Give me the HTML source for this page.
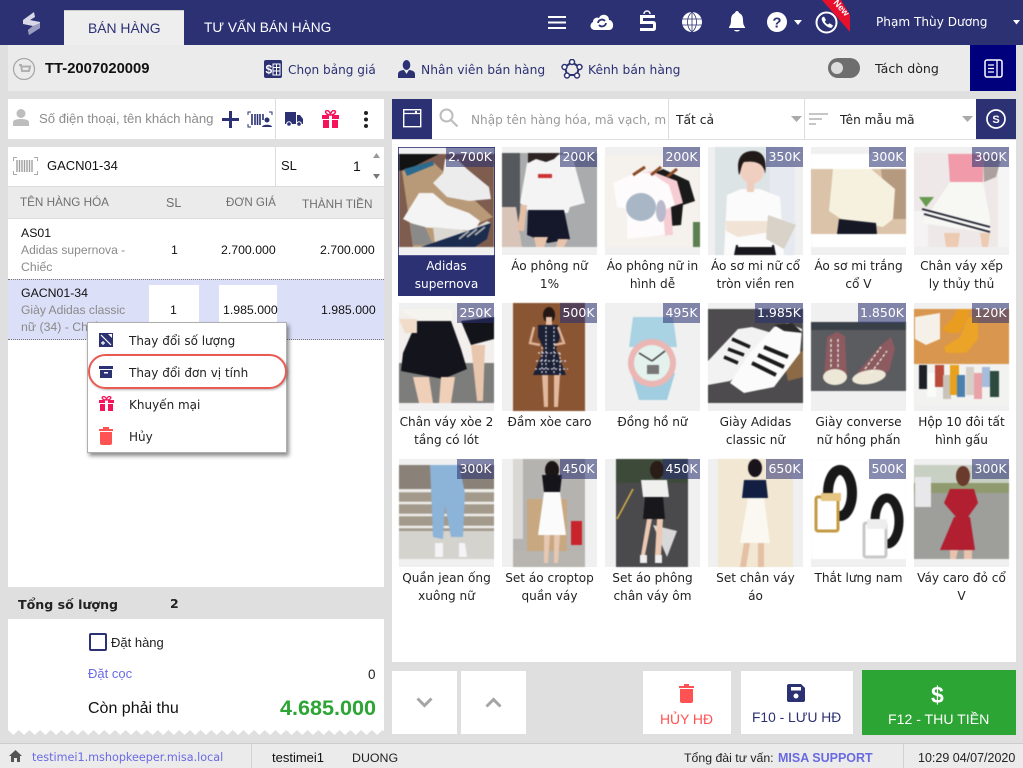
<!DOCTYPE html>
<html><head><meta charset="utf-8"><style>
html,body{margin:0;padding:0}
body{width:1023px;height:768px;position:relative;overflow:hidden;background:#dfdfdf;font-family:"Liberation Sans",sans-serif;font-size:13px;color:#222}
.b{position:absolute}
.t{position:absolute;white-space:nowrap;line-height:18px}
.o{font-family:"DejaVu Sans",sans-serif;font-size:12px}
.n{color:#2b3173}
.g{color:#8a8a8a}
svg{position:absolute;display:block;overflow:hidden}
.tile{position:absolute;width:95px;height:108px;background:#f0f0f0}
.tile svg{left:0;top:0;filter:blur(.5px)}
.p{position:absolute;top:0;right:0;height:20px;line-height:20px;background:rgba(43,49,115,.56);color:#fff;font-family:"DejaVu Sans",sans-serif;font-size:12.5px;text-align:center}
.l{position:absolute;width:103px;text-align:center;font-family:"DejaVu Sans",sans-serif;font-size:12.1px;line-height:18px;color:#222}
</style></head><body>

<!-- header -->
<div class="b" style="left:0;top:0;width:1023px;height:45px;background:#2b3173"></div>
<svg style="left:22px;top:10px" width="20" height="26" viewBox="0 0 20 26"><path d="M1 10 L12 2 L13 7 L8 10 L18 12 L18 18 L7 25 L6 20 L11 16 L1 14Z" fill="#d8d8e6"/><path d="M7 25 L18 18 L18 13 L11 16 L6 20Z" fill="#9a9cc0"/></svg>
<div class="b" style="left:64px;top:10px;width:120px;height:35px;background:#eeeeee;box-sizing:border-box;border-top:1px solid #c9c9c9"></div>
<div class="t n" style="left:88px;top:19px;font-size:13.900px">BÁN HÀNG</div>
<div class="t" style="left:204px;top:19px;font-size:13.700px;color:#fff">TƯ VẤN BÁN HÀNG</div>

<svg style="left:548px;top:15px" width="19" height="15" viewBox="0 0 19 15"><path d="M0 2H18M0 7.500H18M0 13H18" stroke="#fff" stroke-width="2"/></svg>
<svg style="left:589px;top:12px" width="26" height="20" viewBox="0 0 26 20"><path d="M6 18 C1 18 0 12 4 10 C4 6 8 5 10 6 C12 1 20 2 20 8 C25 8 26 18 20 18Z" fill="#fff"/><path d="M9 11 A4 4 0 0 1 16 9 M17 11 A4 4 0 0 1 10 13" fill="none" stroke="#2b3173" stroke-width="1.800"/></svg>
<svg style="left:638px;top:10px" width="20" height="23" viewBox="0 0 20 23"><path d="M6 4 C6 0 12 0 12 4" fill="none" stroke="#fff" stroke-width="1.500"/><path d="M2 5H17V8H5V11H15Q18 11 18 14V18Q18 21 15 21H2V18H15V14H2Z" fill="#fff"/></svg>
<svg style="left:681px;top:11px" width="22" height="22" viewBox="0 0 22 22"><circle cx="11" cy="11" r="10" fill="#fff"/><path d="M1 8H21M1 14H21M11 1V21M11 1C5 6 5 16 11 21M11 1C17 6 17 16 11 21" fill="none" stroke="#2b3173" stroke-width=".8"/></svg>
<svg style="left:728px;top:11px" width="18" height="21" viewBox="0 0 18 21"><path d="M9 0C10 0 11 1 11 2C14 3 15 6 15 9C15 13 16 15 17 16V17H1V16C2 15 3 13 3 9C3 6 4 3 7 2C7 1 8 0 9 0Z" fill="#fff"/><path d="M6 19H12C11 21 7 21 6 19Z" fill="#fff"/></svg>
<svg style="left:767px;top:12px" width="20" height="20" viewBox="0 0 20 20"><circle cx="10" cy="10" r="10" fill="#fff"/><text x="10" y="15.500" text-anchor="middle" font-family="Liberation Sans" font-weight="bold" font-size="15" fill="#2b3173">?</text></svg>
<svg style="left:794px;top:20px" width="8" height="5" viewBox="0 0 8 5"><path d="M0 0H8L4 5Z" fill="#fff"/></svg>
<svg style="left:815px;top:11px" width="23" height="23" viewBox="0 0 23 23"><circle cx="11.500" cy="11.500" r="10" fill="none" stroke="#fff" stroke-width="2"/><path d="M7 6.500L9 5.500L11 9L9.800 10.500C10.500 12 11.500 13 13 13.500L14.500 12.200L18 14.500L17 16.500C14 18.500 5 11 7 6.500Z" fill="#fff"/></svg>
<svg style="left:820px;top:0" width="32" height="34" viewBox="0 0 32 34"><path d="M2 0H21L30 15V32Z" fill="#e8112d"/><text x="0" y="0" transform="translate(13,3) rotate(48)" font-family="Liberation Sans" font-weight="bold" font-size="9" fill="#fff">New</text></svg>
<div class="t" style="left:876px;top:13px;color:#fff;font-family:'DejaVu Sans',sans-serif;font-size:12.100px">Phạm Thùy Dương</div>
<svg style="left:1013px;top:20px" width="7" height="5" viewBox="0 0 7 5"><path d="M0 0H7L3.500 4.500Z" fill="#fff"/></svg>

<!-- toolbar -->
<div class="b" style="left:8px;top:45px;width:962px;height:46px;background:#ebebeb"></div>
<div class="b" style="left:970px;top:45px;width:46px;height:46px;background:#00007d"></div>
<svg style="left:12px;top:57px" width="24" height="24" viewBox="0 0 24 24"><circle cx="12" cy="12" r="10.500" fill="none" stroke="#a5a5a5" stroke-width="1.200"/><path d="M7 8H9L10 14H17L18 9.500H9.500M10.500 16.500h.1M16 16.500h.1" fill="none" stroke="#b0b0b0" stroke-width="2"/></svg>
<div class="t" style="left:45px;top:60px;font-size:14.800px;font-weight:bold;color:#111">TT-2007020009</div>
<svg style="left:264px;top:60px" width="18" height="18" viewBox="0 0 18 18"><rect width="18" height="18" rx="2" fill="#2b3173"/><text x="1.500" y="13.500" font-family="Liberation Sans" font-weight="bold" font-size="12" fill="#fff">$</text><path d="M9 4H16V15H9ZM9 7.500H16M9 11H16M12.500 4V15" fill="none" stroke="#fff" stroke-width="1"/></svg>
<div class="t n o" style="left:288px;top:61px;font-size:12.100px">Chọn bảng giá</div>
<svg style="left:398px;top:60px" width="17" height="18" viewBox="0 0 17 18"><ellipse cx="8.500" cy="5" rx="3.800" ry="5" fill="#2b3173"/><path d="M0 18V14C0 11 4 10 6 10L8.500 14L11 10C13 10 17 11 17 14V18Z" fill="#2b3173"/></svg>
<div class="t n o" style="left:421px;top:61px;font-size:12.300px">Nhân viên bán hàng</div>
<svg style="left:561px;top:59px" width="22" height="20" viewBox="0 0 22 20"><path d="M11 3L18 8L16 16H6L4 8Z" fill="none" stroke="#2b3173" stroke-width="2"/><circle cx="11" cy="3" r="2.500" fill="#fff" stroke="#2b3173" stroke-width="1.500"/><circle cx="18.500" cy="8" r="2.500" fill="#fff" stroke="#2b3173" stroke-width="1.500"/><circle cx="3.500" cy="8" r="2.500" fill="#fff" stroke="#2b3173" stroke-width="1.500"/><circle cx="16" cy="16.500" r="2.500" fill="#fff" stroke="#2b3173" stroke-width="1.500"/><circle cx="6" cy="16.500" r="2.500" fill="#fff" stroke="#2b3173" stroke-width="1.500"/></svg>
<div class="t n o" style="left:588px;top:61px;font-size:12.300px">Kênh bán hàng</div>
<div class="b" style="left:828px;top:58px;width:32px;height:20px;border-radius:10px;background:#6e6e6e"></div>
<div class="b" style="left:831px;top:62px;width:12px;height:12px;border-radius:6px;background:#dcdcdc"></div>
<div class="t o" style="left:875px;top:60px;font-size:12.600px;color:#222">Tách dòng</div>
<svg style="left:984px;top:59px" width="19" height="19" viewBox="0 0 19 19"><rect x="1" y="1" width="17" height="17" rx="2" fill="none" stroke="#fff" stroke-width="1.500"/><path d="M13 1V18M4 6H10M4 9.500H10M4 13H10" stroke="#fff" stroke-width="1.300"/></svg>

<!-- customer row -->
<div class="b" style="left:8px;top:99px;width:376px;height:40px;background:#fff"></div>
<div class="b" style="left:275px;top:99px;width:1px;height:40px;background:#dcdcdc"></div>
<svg style="left:13px;top:109px" width="16" height="17" viewBox="0 0 16 17"><circle cx="8" cy="4.500" r="4.500" fill="#bdbdbd"/><path d="M0 17V13C0 11 4 10 8 10S16 11 16 13V17Z" fill="#bdbdbd"/></svg>
<div class="t" style="left:39px;top:110px;font-size:13.200px;color:#8c8c8c">Số điện thoại, tên khách hàng</div>
<svg style="left:221px;top:110px" width="19" height="19" viewBox="0 0 19 19"><path d="M9.500 1V18M1 9.500H18" stroke="#2b3173" stroke-width="3"/></svg>
<svg style="left:247px;top:111px" width="26" height="17" viewBox="0 0 26 17"><path d="M1 4V1H4M22 1H25V4M1 13V16H4" fill="none" stroke="#2b3173" stroke-width="1"/><path d="M5 3V14M8 3V14M10.500 3V14M13 3V14M16 3V9" stroke="#2b3173" stroke-width="1.600"/><circle cx="20" cy="9" r="2.500" fill="#2b3173"/><path d="M15 16C15 13 25 13 25 16Z" fill="#2b3173"/></svg>
<svg style="left:285px;top:112px" width="18" height="15" viewBox="0 0 18 15"><path d="M0 0H11V12H0Z" fill="#2b3173"/><path d="M12 3H15L18 7V12H12Z" fill="#2b3173"/><circle cx="4" cy="12" r="2.300" fill="#2b3173" stroke="#fff"/><circle cx="14" cy="12" r="2.300" fill="#2b3173" stroke="#fff"/></svg>
<svg style="left:321px;top:110px" width="19" height="18" viewBox="0 0 19 18"><path d="M1 5H18V9H1ZM2 10H17V18H2Z" fill="#f5135a"/><path d="M8 5H11V18H8Z" fill="#fff"/><path d="M9.500 5C5 5 3 1 6 .5C8 .5 9.500 3 9.500 5C9.500 3 11 .5 13 .5C16 1 14 5 9.500 5Z" fill="none" stroke="#f5135a" stroke-width="1.500"/></svg>
<svg style="left:363px;top:110px" width="6" height="19" viewBox="0 0 6 19"><circle cx="3" cy="3" r="2" fill="#222"/><circle cx="3" cy="9.500" r="2" fill="#222"/><circle cx="3" cy="16" r="2" fill="#222"/></svg>

<!-- barcode row -->
<div class="b" style="left:8px;top:147px;width:376px;height:39px;background:#fff"></div>
<div class="b" style="left:275px;top:147px;width:1px;height:39px;background:#dcdcdc"></div>
<svg style="left:13px;top:157px" width="25" height="18" viewBox="0 0 25 18"><path d="M.5 4V.5H4M21 .5H24.500V4M.5 14V17.500H4M21 17.500H24.500V14" fill="none" stroke="#aaa"/><path d="M4 3V15M6.500 3V15M9 3V15M11.500 3V15M14 3V15M16.500 3V15M19 3V15" stroke="#a0a0a0" stroke-width="1.400"/></svg>
<div class="t" style="left:47px;top:157px;font-size:13px;color:#111">GACN01-34</div>
<div class="t" style="left:281px;top:157px;font-size:13px;color:#111">SL</div>
<div class="t" style="left:353px;top:157px;font-size:14px;color:#111">1</div>
<svg style="left:372px;top:153px" width="9" height="28" viewBox="0 0 9 28"><path d="M1 5L4.500 0L8 5Z" fill="#999"/><path d="M1 21H8L4.500 26Z" fill="#777"/></svg>

<!-- table -->
<div class="b" style="left:8px;top:186px;width:376px;height:33px;background:#ebebeb;border-top:1px solid #dcdcdc;border-bottom:1px solid #dcdcdc;box-sizing:border-box"></div>
<div class="t" style="left:20px;top:194px;font-size:11.700px;color:#6f6f6f">TÊN HÀNG HÓA</div>
<div class="t" style="left:166px;top:194px;font-size:12.500px;color:#6f6f6f">SL</div>
<div class="t" style="left:226px;top:194px;font-size:11.600px;color:#6f6f6f">ĐƠN GIÁ</div>
<div class="t" style="left:302px;top:195px;font-size:11.800px;color:#6f6f6f">THÀNH TIỀN</div>
<div class="b" style="left:8px;top:219px;width:376px;height:368px;background:#fff"></div>
<div class="b" style="left:8px;top:279px;width:376px;height:61px;background:#dcdff8"></div>
<div class="b" style="left:8px;top:279px;width:376px;border-top:1px dotted #777"></div>
<div class="b" style="left:8px;top:339px;width:376px;border-top:1px dotted #777"></div>
<div class="t" style="left:21px;top:224px;font-size:12.300px;color:#111">AS01</div>
<div class="t g" style="left:21px;top:241px;font-size:12.100px">Adidas supernova -</div>
<div class="t g" style="left:21px;top:258px;font-size:12.300px">Chiếc</div>
<div class="t" style="left:171px;top:241px;font-size:12.300px;color:#111">1</div>
<div class="t" style="left:221px;top:241px;font-size:12.300px;color:#111">2.700.000</div>
<div class="t" style="left:320px;top:241px;font-size:12.300px;color:#111">2.700.000</div>
<div class="t" style="left:21px;top:284px;font-size:12.300px;color:#111">GACN01-34</div>
<div class="t g" style="left:21px;top:301px;font-size:12.100px">Giày Adidas classic</div>
<div class="t g" style="left:21px;top:318px;font-size:12.300px">nữ (34) - Chiếc</div>
<div class="b" style="left:149px;top:285px;width:50px;height:50px;background:#fff"></div>
<div class="b" style="left:219px;top:285px;width:58px;height:50px;background:#fff"></div>
<div class="t" style="left:170px;top:301px;font-size:12.300px;color:#111">1</div>
<div class="t" style="left:223px;top:301px;font-size:12.300px;color:#111">1.985.000</div>
<div class="t" style="left:321px;top:301px;font-size:12.300px;color:#111">1.985.000</div>

<!-- context menu -->
<div class="b" style="left:87px;top:322px;width:200px;height:131px;background:#fff;border:1px solid #aeaeae;box-sizing:border-box;box-shadow:2px 3px 4px rgba(0,0,0,.45)"></div>
<svg style="left:99px;top:333px" width="14" height="14" viewBox="0 0 14 14"><rect width="14" height="14" fill="#2b3173"/><path d="M2 2L12 12" stroke="#fff" stroke-width="1.200"/><path d="M9 1H13V5Z" fill="#fff"/><path d="M2 10H6M4 8V12" stroke="#fff" stroke-width="1.200"/></svg>
<div class="t o" style="left:129px;top:332px;font-size:12px">Thay đổi số lượng</div>
<svg style="left:99px;top:366px" width="14" height="12" viewBox="0 0 14 12"><rect width="14" height="3" fill="#2b3173"/><rect x="1" y="4" width="12" height="8" fill="#2b3173"/><rect x="5" y="6" width="4" height="1.500" fill="#fff"/></svg>
<div class="t o" style="left:129px;top:364px;font-size:12px">Thay đổi đơn vị tính</div>
<svg style="left:99px;top:396px" width="15" height="15" viewBox="0 0 15 15"><path d="M0 4H15V7H0ZM1 8H14V15H1Z" fill="#f5135a"/><path d="M6 4H9V15H6Z" fill="#fff"/><path d="M7.500 4C3 4 2 1 4.500.5C6 .5 7.500 2 7.500 4C7.500 2 9 .5 10.500.5C13 1 12 4 7.500 4Z" fill="none" stroke="#f5135a" stroke-width="1.300"/></svg>
<div class="t o" style="left:129px;top:396px;font-size:12px">Khuyến mại</div>
<svg style="left:99px;top:427px" width="14" height="18" viewBox="0 0 14 18"><path d="M0 2H14V4H0Z" fill="#ff5252"/><path d="M4 0H10V2H4Z" fill="#ff5252"/><path d="M1 5H13V16Q13 18 11 18H3Q1 18 1 16Z" fill="#ff5252"/></svg>
<div class="t o" style="left:129px;top:428px;font-size:12px">Hủy</div>
<div class="b" style="left:88px;top:354px;width:199px;height:35px;box-sizing:border-box;border:2px solid #ea5a52;border-radius:18px;box-shadow:1px 1px 2px rgba(0,0,0,.3)"></div>

<!-- totals -->
<div class="t o" style="left:18px;top:596px;font-size:12.600px;font-weight:bold;color:#222">Tổng số lượng</div>
<div class="t o" style="left:170px;top:595px;font-size:12.500px;font-weight:bold;color:#222">2</div>
<div class="b" style="left:8px;top:619px;width:376px;height:111px;background:#fff"></div>
<svg style="left:8px;top:729px" width="376" height="7" viewBox="0 0 376 7"><defs><pattern id="z" width="10.700" height="7" patternUnits="userSpaceOnUse"><path d="M0 1L5.350 6L10.700 1V0H0Z" fill="#fff"/></pattern></defs><rect width="376" height="7" fill="url(#z)"/></svg>
<div class="b" style="left:89px;top:633px;width:18px;height:18px;box-sizing:border-box;border:2px solid #2b3173;border-radius:2px"></div>
<div class="t" style="left:111px;top:634px;font-size:13px;color:#222">Đặt hàng</div>
<div class="t" style="left:88px;top:665px;font-size:13px;color:#6a6ae6">Đặt cọc</div>
<div class="t" style="left:368px;top:666px;font-size:13.500px;color:#222">0</div>
<div class="t" style="left:88px;top:700px;font-size:16px;color:#111">Còn phải thu</div>
<div class="t" style="left:280px;top:699px;font-size:21.600px;font-weight:bold;color:#2ca535">4.685.000</div>

<!-- product header -->
<div class="b" style="left:392px;top:99px;width:624px;height:40px;background:#fff"></div>
<div class="b" style="left:392px;top:99px;width:40px;height:40px;background:#2b3173"></div>
<svg style="left:403px;top:109px" width="19" height="19" viewBox="0 0 19 19"><rect x=".7" y=".7" width="17" height="17" fill="none" stroke="#fff" stroke-width="1.400"/><path d="M1 4.500H18" stroke="#fff" stroke-width="1.200"/><rect x="12" y="2" width="2" height="2" fill="#fff"/></svg>
<svg style="left:439px;top:108px" width="20" height="20" viewBox="0 0 20 20"><circle cx="7.500" cy="7.500" r="6" fill="none" stroke="#bdbdbd" stroke-width="2"/><path d="M12 12L18.500 18.500" stroke="#bdbdbd" stroke-width="2.200"/></svg>
<div class="b" style="left:471px;top:111px;width:195px;height:18px;overflow:hidden"><div class="t o" style="left:0;top:0;font-size:12.100px;color:#9a9a9a">Nhập tên hàng hóa, mã vạch, mã</div></div>
<div class="b" style="left:668px;top:99px;width:1px;height:40px;background:#dcdcdc"></div>
<div class="b" style="left:804px;top:99px;width:1px;height:40px;background:#dcdcdc"></div>
<div class="t o" style="left:676px;top:111px;font-size:12.300px;color:#222">Tất cả</div>
<svg style="left:791px;top:116px" width="11" height="6" viewBox="0 0 11 6"><path d="M0 0H11L5.500 6Z" fill="#aaa"/></svg>
<svg style="left:809px;top:113px" width="19" height="13" viewBox="0 0 19 13"><path d="M0 1H19M0 6H13M0 11H7" stroke="#c6c6c6" stroke-width="2"/></svg>
<div class="t o" style="left:840px;top:111px;font-size:12.100px;color:#222">Tên mẫu mã</div>
<svg style="left:962px;top:116px" width="11" height="6" viewBox="0 0 11 6"><path d="M0 0H11L5.500 6Z" fill="#aaa"/></svg>
<div class="b" style="left:976px;top:99px;width:40px;height:40px;background:#2b3173"></div>
<svg style="left:986px;top:109px" width="20" height="20" viewBox="0 0 20 20"><circle cx="10" cy="10" r="9" fill="none" stroke="#fff" stroke-width="1.700"/><text x="10" y="14" text-anchor="middle" font-family="Liberation Sans" font-weight="bold" font-size="11" fill="#fff">S</text></svg>

<!-- product panel -->
<div class="b" style="left:392px;top:140px;width:624px;height:522px;background:#fff"></div>
<div class="b" style="left:398px;top:147px;width:97px;height:149px;background:#2b3173"></div>
<div class="b" style="left:399px;top:148px;width:95px;height:107px;background:#f0f0f0"></div>

<!-- ROW 1 -->
<div class="tile" style="left:399px;top:147px;height:108px;background:transparent"><svg width="95" height="108" viewBox="0 0 95 108"><rect y="1" width="95" height="107" fill="#f0f0f0"/><rect y="7" width="95" height="93" fill="#7e5c4e"/><path d="M0 7H40L14 20L0 24Z" fill="#121212"/><path d="M3 24L34 15L50 30L94 70L26 100H14Z" fill="#b99a78"/><path d="M5 22L34 14L35 18L8 29Z" fill="#2c6a90"/><path d="M34 36L44 26L46 12L60 14L68 22L90 40L92 52L70 54L48 50Z" fill="#ececec"/><path d="M4 72L20 46L34 46L48 58L70 66L81 74L76 84L20 80Z" fill="#f4f4f4"/><path d="M11 76L26 80L34 98H14Z" fill="#8a8a8a"/><path d="M34 80L70 84L88 74L92 76L60 90L36 98Z" fill="#dcd8d2"/><path d="M22 100L92 76L88 92L76 100Z" fill="#1c2c4e"/><path d="M60 92L70 84M68 90L78 82M76 88L86 80" stroke="#aaa" stroke-width="2"/></svg><div class="p" style="width:48px;top:0">2.700K</div></div>
<div class="l" style="left:395px;top:257px;color:#fff">Adidas<br>supernova</div>

<div class="tile" style="left:502px;top:147px"><svg width="95" height="108" viewBox="0 0 95 108"><rect y="6" width="95" height="94" fill="#a9abac"/><rect y="6" width="18" height="94" fill="#55585c"/><path d="M0 60H14L20 100H0Z" fill="#d8c4b8"/><path d="M25 16L36 8H58L70 8L83 56L68 60L66 66H26L24 60L18 56Z" fill="#f4f4f4"/><path d="M26 6H58L52 12L44 15L34 12L26 16Z" fill="#2d2423"/><path d="M26 63H62L68 92L46 96L25 88Z" fill="#15172a"/><path d="M19 58H25L22 84H15Z" fill="#e4bfa8"/><path d="M56 92H66L62 100H54Z M32 90H46L42 100H34Z" fill="#e8c3ab"/><path d="M36 27H50V31H36Z" fill="#c33"/></svg><div class="p" style="width:37px">200K</div></div>
<div class="l" style="left:498px;top:257px">Áo phông nữ<br>1%</div>

<div class="tile" style="left:605px;top:147px"><svg width="95" height="108" viewBox="0 0 95 108"><rect y="8" width="95" height="92" fill="#f5f1ec"/><path d="M40 30L58 22L84 34L90 54L78 58L76 78L54 80Z" fill="#1a1a1a"/><path d="M30 28L46 24L72 34L78 56L66 60L68 88L30 90Z" fill="#f7cdd4"/><path d="M8 36L30 26L46 26L64 38L70 58L58 64L60 88L22 92L22 62L12 60Z" fill="#fdfbfb"/><path d="M28 28L40 20M46 28L56 20M62 30L72 22" stroke="#8a4a28" stroke-width="3"/><ellipse cx="36" cy="60" rx="15" ry="14" fill="#a8b6c6"/><ellipse cx="56" cy="64" rx="5" ry="11" fill="#b9b9cc"/><path d="M88 75H95V100H88Z" fill="#5c7f52"/></svg><div class="p" style="width:37px">200K</div></div>
<div class="l" style="left:601px;top:257px">Áo phông nữ in<br>hình dễ</div>

<div class="tile" style="left:708px;top:147px"><svg width="95" height="108" viewBox="0 0 95 108"><rect x="7" y="0" width="80" height="108" fill="#dde4e6"/><rect x="62" width="25" height="108" fill="#e6eaf0"/><path d="M16 108L19 48L33 42H52L72 50L76 108Z" fill="#fbfbfb"/><path d="M18 74H64L70 84L30 90L18 84Z" fill="#f1e3d6"/><path d="M60 68L88 78L76 102L58 92Z" fill="#d8d2c8"/><path d="M28 98H66L68 108H26Z" fill="#17171d"/><rect x="30" y="98" width="34" height="2" fill="#fff"/><ellipse cx="44" cy="22" rx="12" ry="15" fill="#f1cfc0"/><path d="M31 28C26 4 42 4 45 4C60 4 58 22 57 27C56 14 44 14 36 15C33 18 33 25 31 28Z" fill="#221a18"/><path d="M39 33H46V45H39Z" fill="#efcdbd"/></svg><div class="p" style="width:37px">350K</div></div>
<div class="l" style="left:704px;top:257px">Áo sơ mi nữ cổ<br>tròn viền ren</div>

<div class="tile" style="left:811px;top:147px"><svg width="95" height="108" viewBox="0 0 95 108"><rect y="7" width="95" height="15" fill="#fff"/><rect y="22" width="95" height="65" fill="#dac3a8"/><path d="M70 22H95V72H76Z" fill="#b69a80"/><path d="M22 22H60L84 42L82 72L72 80L30 72L18 64Z" fill="#f6f1df"/><path d="M28 72L65 76L66 87H26Z" fill="#161826"/><rect y="87" width="95" height="13" fill="#fff"/></svg><div class="p" style="width:37px">300K</div></div>
<div class="l" style="left:807px;top:257px">Áo sơ mi trắng<br>cổ V</div>

<div class="tile" style="left:914px;top:147px"><svg width="95" height="108" viewBox="0 0 95 108"><rect y="6" width="95" height="94" fill="#eee9e8"/><rect x="84" y="6" width="11" height="94" fill="#f5f5f5"/><rect x="0" y="64" width="14" height="36" fill="#f5f3f3"/><path d="M34 7H69L69 35H36Z" fill="#f19aaa"/><path d="M69 8H88L82 30L70 35Z" fill="#5a4a46" opacity=".45"/><path d="M36 35L69 35L76 72L76 86L8 76L22 56Z" fill="#f7f8f3"/><path d="M8 62L76 80M10 67L76 85" stroke="#232333" stroke-width="1.800"/><path d="M30 86H46L44 100H32Z M66 86H76L74 100H68Z" fill="#edcbb2"/><path d="M5 50H20L12 60Z" fill="#6a9950"/></svg><div class="p" style="width:37px">300K</div></div>
<div class="l" style="left:910px;top:257px">Chân váy xếp<br>ly thủy thủ</div>

<!-- ROW 2 -->
<div class="tile" style="left:399px;top:303px"><svg width="95" height="108" viewBox="0 0 95 108"><rect y="6" width="95" height="94" fill="#f3efec"/><rect y="60" width="95" height="40" fill="#7d7e7c"/><path d="M0 6H54L52 18H18Z" fill="#f5f4ee"/><path d="M18 18H52L62 46L68 66L44 76L2 68L4 50Z" fill="#14141c"/><path d="M0 16H18L18 30L6 30Z" fill="#f0dcc8"/><path d="M14 74H30L34 100H20ZM42 74H56L52 100H40Z" fill="#efcfb8"/><path d="M62 18L95 14V36L72 42Z" fill="#13131a"/><path d="M72 42H86L84 98H78Z" fill="#e8c6ae"/></svg><div class="p" style="width:37px">250K</div></div>
<div class="l" style="left:395px;top:413px">Chân váy xòe 2<br>tầng có lót</div>

<div class="tile" style="left:502px;top:303px"><svg width="95" height="108" viewBox="0 0 95 108"><rect x="11" width="72" height="108" fill="#8a5533"/><ellipse cx="47" cy="12" rx="6" ry="8" fill="#241714"/><rect x="44" y="14" width="6" height="8" fill="#e8c2a8"/><path d="M36 22H56L58 34L54 46L64 72H31L42 46L36 34Z" fill="#1b2034"/><path d="M40 72H46L46 104H42ZM52 72H58L56 104H52Z" fill="#e2b99c"/><path d="M32 24L28 40L38 42M56 24L62 40L52 42" fill="none" stroke="#dcb196" stroke-width="2.500"/><path d="M36 50H60M34 58H64M33 66H66M44 24V72M52 24V72M40 44V72M58 50V72" stroke="#dfe0ea" stroke-width="1.200" stroke-dasharray="2 2"/></svg><div class="p" style="width:37px">500K</div></div>
<div class="l" style="left:498px;top:413px">Đầm xòe caro</div>

<div class="tile" style="left:605px;top:303px"><svg width="95" height="108" viewBox="0 0 95 108"><path d="M28 14H68L72 44H24Z" fill="#a9d2e2"/><path d="M26 70H70L62 97H34Z" fill="#a0cde0"/><circle cx="47" cy="60" r="24" fill="#eab7b4"/><circle cx="47" cy="60" r="18" fill="#e4f2ee"/><path d="M47 58L34 50M47 58L60 48" stroke="#444" stroke-width="1.600"/><rect x="42" y="62" width="12" height="9" fill="#777"/></svg><div class="p" style="width:37px">495K</div></div>
<div class="l" style="left:601px;top:413px">Đồng hồ nữ</div>

<div class="tile" style="left:708px;top:303px"><svg width="95" height="108" viewBox="0 0 95 108"><rect y="6" width="95" height="94" fill="#4d4b4d"/><path d="M75 54L95 48V74L80 78Z" fill="#8c6a45"/><path d="M0 58L30 26L44 24L64 30L48 60L22 78L0 82Z" fill="#f2f2f2"/><path d="M22 80L42 50L66 24L80 20L94 26L92 50L66 84L36 90Z" fill="#fbfbfb"/><path d="M50 52L76 64M44 60L68 72M56 44L80 54" stroke="#1a1a1a" stroke-width="4"/><path d="M24 36L42 44M20 46L36 52M16 54L30 60" stroke="#1a1a1a" stroke-width="3.500"/><path d="M66 22L84 20L95 30L76 28Z" fill="#2b2b2b"/></svg><div class="p" style="width:48px">1.985K</div></div>
<div class="l" style="left:704px;top:413px">Giày Adidas<br>classic nữ</div>

<div class="tile" style="left:811px;top:303px"><svg width="95" height="108" viewBox="0 0 95 108"><rect y="19" width="95" height="69" fill="#5a5c60"/><rect y="19" width="95" height="8" fill="#3a4048"/><path d="M16 34L26 29L34 33L36 76L13 74Z" fill="#8d5a60"/><ellipse cx="24" cy="74" rx="12" ry="8" fill="#ece7d6"/><path d="M46 70L68 44L80 34L84 46L78 68L62 76Z" fill="#8d5a60"/><ellipse cx="58" cy="74" rx="17" ry="7" fill="#ece7d6" transform="rotate(-10 58 74)"/><path d="M54 66L70 44M60 70L76 48" stroke="#efe" stroke-width="1.200" stroke-dasharray="3 2"/><path d="M20 36V66M27 36V66" stroke="#efe" stroke-width="1.200" stroke-dasharray="3 2"/></svg><div class="p" style="width:48px">1.850K</div></div>
<div class="l" style="left:807px;top:413px">Giày converse<br>nữ hồng phấn</div>

<div class="tile" style="left:914px;top:303px"><svg width="95" height="108" viewBox="0 0 95 108"><rect y="6" width="95" height="55" fill="#d8964e"/><path d="M1 14L26 10L26 36L12 42L1 36Z" fill="#f6f1e8"/><path d="M44 6H56L54 14L46 30H34L28 26L38 16Z" fill="#e89d20"/><path d="M54 14H64V36L52 50H32L30 44L46 34Z" fill="#eba328"/><rect y="61" width="95" height="41" fill="#f2f2f0"/><rect x="5" y="62" width="8" height="24" fill="#1e2228"/><rect x="13" y="70" width="9" height="24" fill="#fbfbf8"/><rect x="21" y="62" width="9" height="22" fill="#b84b3a"/><rect x="29" y="72" width="8" height="24" fill="#c9c2b8"/><rect x="36" y="62" width="9" height="30" fill="#e8a11c"/><rect x="43" y="72" width="8" height="22" fill="#4a7fae"/><rect x="52" y="64" width="8" height="28" fill="#d5cfc8"/><rect x="60" y="70" width="8" height="26" fill="#e9a3a8"/><rect x="68" y="64" width="8" height="20" fill="#a5bddb"/><rect x="76" y="68" width="9" height="26" fill="#2c4a3e"/></svg><div class="p" style="width:37px">120K</div></div>
<div class="l" style="left:910px;top:413px">Hộp 10 đôi tất<br>hình gấu</div>

<!-- ROW 3 -->
<div class="tile" style="left:399px;top:459px"><svg width="95" height="108" viewBox="0 0 95 108"><rect y="6" width="95" height="94" fill="#e4e3de"/><rect y="6" width="95" height="24" fill="#8a8278"/><path d="M0 32H95V72H0Z" fill="#a39a8c"/><path d="M0 32H95M0 44H95M0 56H95M0 68H95" stroke="#efedea" stroke-width="2.500"/><rect y="72" width="95" height="28" fill="#d5d3ce"/><path d="M31 6H60L66 34L64 78L52 78L46 46L44 80L34 78Z" fill="#8cb3d8"/><path d="M36 84H44V98H36ZM60 84H66L68 98H60Z" fill="#f4f4f6"/></svg><div class="p" style="width:37px">300K</div></div>
<div class="l" style="left:395px;top:569px">Quần jean ống<br>xuông nữ</div>

<div class="tile" style="left:502px;top:459px"><svg width="95" height="108" viewBox="0 0 95 108"><rect x="11" width="72" height="108" fill="#b5b3b0"/><rect x="11" width="10" height="80" fill="#dad8d4"/><rect x="25" y="40" width="40" height="52" fill="#c8a880"/><rect x="11" y="92" width="72" height="16" fill="#b8b5b0"/><ellipse cx="50" cy="11" rx="7" ry="9" fill="#1b1515"/><path d="M40 16H60L58 33H42Z" fill="#14141a"/><path d="M42 33H58L64 76H36Z" fill="#fbfbfb"/><path d="M42 76H48L46 104H42ZM52 76H58L56 104H52Z" fill="#e6c7b2"/><path d="M69 62H80V86H69Z" fill="#c8242c"/></svg><div class="p" style="width:37px">450K</div></div>
<div class="l" style="left:498px;top:569px">Set áo croptop<br>quần váy</div>

<div class="tile" style="left:605px;top:459px"><svg width="95" height="108" viewBox="0 0 95 108"><rect x="11" width="72" height="108" fill="#4a4a4c"/><rect x="11" width="72" height="24" fill="#3d4a3a"/><path d="M48 66L72 72L62 98Z" fill="#d8d8d8"/><ellipse cx="52" cy="11" rx="7" ry="9" fill="#2a1d18"/><path d="M36 21H62L64 38H38Z" fill="#f0f0ee"/><path d="M40 38H58L60 60H38Z" fill="#17171c"/><path d="M42 60H47L40 96H36ZM52 60H58L56 96H50Z" fill="#ecc8b2"/><path d="M35 96H42V104H35ZM50 96H57V104H50Z" fill="#eee"/><path d="M12 60L28 30" stroke="#d9b04a" stroke-width="1.500"/></svg><div class="p" style="width:37px">450K</div></div>
<div class="l" style="left:601px;top:569px">Set áo phông<br>chân váy ôm</div>

<div class="tile" style="left:708px;top:459px"><svg width="95" height="108" viewBox="0 0 95 108"><rect x="10" width="75" height="108" fill="#f1e7d2"/><ellipse cx="47" cy="9" rx="7" ry="9" fill="#19141a"/><path d="M36 21H58L60 39H34Z" fill="#131f42"/><path d="M40 39H56L62 84H32Z" fill="#fbf8f1"/><path d="M36 84H42L38 108H32ZM50 84H56L56 108H50Z" fill="#e4c0a4"/></svg><div class="p" style="width:37px">650K</div></div>
<div class="l" style="left:704px;top:569px">Set chân váy<br>áo</div>

<div class="tile" style="left:811px;top:459px"><svg width="95" height="108" viewBox="0 0 95 108"><rect y="0" width="95" height="100" fill="#fff"/><ellipse cx="29" cy="34" rx="12" ry="23" fill="none" stroke="#181818" stroke-width="10"/><ellipse cx="76" cy="62" rx="12" ry="23" fill="none" stroke="#181818" stroke-width="9"/><rect x="5" y="38" width="22" height="34" rx="2" fill="#fff" stroke="#c39a43" stroke-width="3"/><path d="M10 34H30V42H10Z" fill="#e4c582"/><rect x="53" y="64" width="22" height="34" rx="2" fill="#fff" stroke="#c8c8c8" stroke-width="3"/><path d="M56 60H76V70H56Z" fill="#eee"/></svg><div class="p" style="width:37px">500K</div></div>
<div class="l" style="left:807px;top:569px">Thắt lưng nam</div>

<div class="tile" style="left:914px;top:459px"><svg width="95" height="108" viewBox="0 0 95 108"><rect y="6" width="95" height="94" fill="#9e9e9b"/><rect y="6" width="95" height="20" fill="#c8d0c4"/><rect y="24" width="95" height="10" fill="#8f9a6e"/><rect x="1" y="18" width="16" height="30" fill="#e8e8ea"/><ellipse cx="49" cy="17" rx="7" ry="10" fill="#6a3a2c"/><path d="M36 30H60L64 44L54 58H42L30 44Z" fill="#b21f31"/><path d="M40 58H56L61 91H26Z" fill="#b21f31"/><path d="M36 91H44L42 100H36ZM50 91H58L58 100H50Z" fill="#e8c2ac"/></svg><div class="p" style="width:37px">300K</div></div>
<div class="l" style="left:910px;top:569px">Váy caro đỏ cổ<br>V</div>

<!-- bottom buttons -->
<div class="b" style="left:392px;top:671px;width:65px;height:63px;background:#fff"></div>
<div class="b" style="left:461px;top:671px;width:65px;height:63px;background:#fff"></div>
<svg style="left:416px;top:697px" width="17" height="11" viewBox="0 0 17 11"><path d="M1.500 1.500L8.500 8.500L15.500 1.500" fill="none" stroke="#a5a5a5" stroke-width="3"/></svg>
<svg style="left:485px;top:697px" width="17" height="11" viewBox="0 0 17 11"><path d="M1.500 9.500L8.500 2.500L15.500 9.500" fill="none" stroke="#a5a5a5" stroke-width="3"/></svg>
<div class="b" style="left:643px;top:671px;width:88px;height:63px;background:#fff"></div>
<svg style="left:679px;top:684px" width="15" height="19" viewBox="0 0 15 19"><path d="M0 2H15V4H0ZM5 0H10V2H5Z" fill="#ff5252"/><path d="M1 5H14V17Q14 19 12 19H3Q1 19 1 17Z" fill="#ff5252"/></svg>
<div class="t" style="left:660px;top:710px;font-size:13.900px;color:#ff5252">HỦY HĐ</div>
<div class="b" style="left:741px;top:671px;width:112px;height:63px;background:#fff"></div>
<svg style="left:787px;top:684px" width="18" height="18" viewBox="0 0 18 18"><path d="M2 0H14L18 4V16Q18 18 16 18H2Q0 18 0 16V2Q0 0 2 0Z" fill="#2b3173"/><rect x="4" y="3" width="10" height="3.500" fill="#fff"/><circle cx="9" cy="12" r="2.500" fill="#fff"/></svg>
<div class="t n" style="left:752px;top:709px;font-size:13.800px">F10 - LƯU HĐ</div>
<div class="b" style="left:862px;top:670px;width:154px;height:65px;background:#2ca535"></div>
<div class="t" style="left:931px;top:682px;font-size:23px;font-weight:bold;line-height:26px;color:#fff">$</div>
<div class="t" style="left:888px;top:710px;font-size:14.100px;color:#fff">F12 - THU TIỀN</div>

<!-- status -->
<div class="b" style="left:0;top:743px;width:1023px;height:25px;background:#ebebeb;border-top:1px solid #ccc;box-sizing:border-box"></div>
<div class="b" style="left:251px;top:744px;width:1px;height:24px;background:#d2d2d2"></div>
<div class="b" style="left:903px;top:744px;width:1px;height:24px;background:#d2d2d2"></div>
<svg style="left:9px;top:750px" width="13" height="12" viewBox="0 0 13 12"><path d="M6.500 0L13 6H11V12H8V8H5V12H2V6H0Z" fill="#555"/></svg>
<div class="t o" style="left:32px;top:749px;font-size:11.200px;color:#6a6ae6">testimei1.mshopkeeper.misa.local</div>
<div class="t" style="left:272px;top:749px;font-size:13px;color:#111">testimei1</div>
<div class="t" style="left:352px;top:749px;font-size:12.400px;color:#222">DUONG</div>
<div class="t" style="left:684px;top:749px;font-size:12.300px;color:#222">Tổng đài tư vấn:</div>
<div class="t" style="left:778px;top:749px;font-size:12.500px;font-weight:bold;color:#6a6ae0">MISA SUPPORT</div>
<div class="t" style="left:918px;top:749px;font-size:12.500px;color:#222">10:29 04/07/2020</div>
</body></html>
